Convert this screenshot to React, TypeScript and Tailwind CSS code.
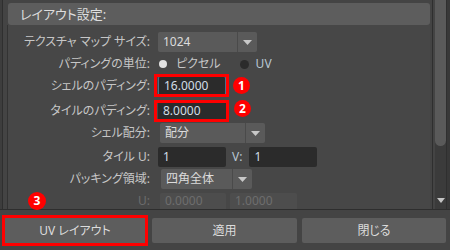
import React from "react";

const FONT = "font-['Noto_Sans','Noto_Sans_CJK_JP',sans-serif]";

function Arrow() {
  return (
    <svg width="9" height="5" viewBox="0 0 9 5">
      <polygon points="0,0 9,0 4.5,5" fill="#c8c8c8" />
    </svg>
  );
}

function Dropdown({ value, textW }: { value: string; textW: string }) {
  return (
    <div className="flex h-[20px] rounded-[2px] bg-[#5a5a5a]">
      <div className={`${textW} flex items-center pl-[5px] text-[#dcdcdc]`}>{value}</div>
      <div className="w-[20px] flex items-center justify-center border-l border-[#4a4a4a]">
        <Arrow />
      </div>
    </div>
  );
}

function Input({ value, w, focused }: { value: string; w: string; focused?: boolean }) {
  return (
    <div
      className={`${w} h-[20px] rounded-[2px] bg-[#2b2b2b] flex items-center pl-[5px] text-[#d2dde6] ${
        focused ? "border border-[#4d6f8c] pl-[4px]" : ""
      }`}
    >
      {value}
    </div>
  );
}

function Row({
  label,
  mt,
  children,
  dim,
  h = "h-[20px]",
}: {
  label: string;
  mt: string;
  children: React.ReactNode;
  dim?: boolean;
  h?: string;
}) {
  return (
    <div className={`flex items-center ${h} shrink-0 ${mt}`}>
      <div className={`w-[142px] text-right whitespace-nowrap ${dim ? "text-[#6c6c6c]" : "text-[#c6c6c6]"}`}>{label}</div>
      <div className="ml-[8px] flex items-center">{children}</div>
    </div>
  );
}

export default function App() {
  return (
    <div
      className={`relative w-[450px] h-[250px] overflow-hidden bg-[#444444] text-[12px] leading-none ${FONT}`}
      style={{ fontFeatureSettings: '"palt"' }}
    >
      <div className="flex h-[209px]">
        <div className="w-[2px] bg-[#3d3d3d]" />
        <div className="flex-1 flex flex-col border-l border-r border-[#2f2f2f] pt-[3px] pl-[5px] pr-[2px] overflow-hidden">
          <div className="h-[22px] shrink-0 rounded-[3px] bg-[#5d5d5d] flex items-center pl-[12px] text-[13px] text-[#dedede]">
            レイアウト設定:
          </div>
          <div className="flex-1 -ml-px border-l border-[#333333] bg-[#474747] flex flex-col overflow-hidden">
            <Row label="テクスチャ マップ サイズ:" mt="mt-[7px]">
              <Dropdown value="1024" textW="w-[79px]" />
            </Row>
            <Row label="パディングの単位:" mt="mt-[2px]">
              <div className="flex items-center">
                <div className="ml-[1px] w-[8px] h-[8px] rounded-full bg-[#e2e2e2]" />
                <span className="ml-[9px] text-[#c6c6c6]">ピクセル</span>
                <div className="ml-[19px] w-[9px] h-[9px] rounded-full bg-[#2b2b2b]" />
                <span className="ml-[7px] text-[#b8c6d2]">UV</span>
              </div>
            </Row>
            <Row label="シェルのパディング:" mt="mt-[2px]">
              <div className="relative">
                <Input value="16.0000" w="w-[68px]" focused />
                <div className="absolute left-[-4px] top-[-2px] w-[75px] h-[23px] border-[3px] border-[#ff0000]" />
              </div>
            </Row>
            <Row label="タイルのパディング:" mt="mt-[5px]">
              <div className="relative">
                <Input value="8.0000" w="w-[68px]" />
                <div className="absolute left-[-4px] top-[-1px] w-[75px] h-[22px] border-[3px] border-[#ff0000]" />
              </div>
            </Row>
            <Row label="シェル配分:" mt="mt-[2px]">
              <div className="ml-[2px]">
                <Dropdown value="配分" textW="w-[85px]" />
              </div>
            </Row>
            <Row label="タイル U:" mt="mt-[4px]">
              <Input value="1" w="w-[68px]" />
              <span className="ml-[6px] text-[#b8c6d2]">V:</span>
              <div className="ml-[7px]">
                <Input value="1" w="w-[68px]" />
              </div>
            </Row>
            <Row label="パッキング領域:" mt="mt-[2px]">
              <div className="ml-[3px]">
                <Dropdown value="四角全体" textW="w-[71px]" />
              </div>
            </Row>
            <Row label="U:" mt="mt-[4px]" dim h="h-[16px]">
              <div className="ml-[2px] w-[66px] h-[16px] rounded-t-[2px] bg-[#4d4d4d] flex items-center pl-[5px] text-[#6e6e6e]">
                0.0000
              </div>
              <div className="ml-[4px] w-[67px] h-[16px] rounded-t-[2px] bg-[#4d4d4d] flex items-center pl-[5px] text-[#6e6e6e]">
                1.0000
              </div>
            </Row>
          </div>
        </div>
        <div className="w-[17px] flex">
          <div className="w-[2px]" />
          <div className="w-[11px] bg-[#3b3b3b] flex flex-col">
            <div className="h-[146px] rounded-b-full bg-[#5a5a5a]" />
            <div className="flex-1" />
            <div className="h-[12px] flex items-start justify-center pt-[1px]">
              <svg width="8" height="5" viewBox="0 0 8 5">
                <polygon points="0,0 8,0 4,5" fill="#c4c4c4" />
              </svg>
            </div>
          </div>
          <div className="w-[4px] bg-[#383838] border-l border-[#2f2f2f]" />
        </div>
      </div>
      <div className="h-[41px] border-t border-[#2e2e2e] flex items-start pl-[2px]">
        <div className="mt-[5px] w-[146px] h-[31px] border-[3px] border-[#ff0000] bg-[#5d5d5d] flex items-center justify-center text-[#dcdcdc]">
          UV レイアウト
        </div>
        <div className="mt-[8px] ml-[4px] w-[145px] h-[25px] rounded-[2px] bg-[#5d5d5d] flex items-center justify-center text-[#dcdcdc]">
          適用
        </div>
        <div className="mt-[8px] ml-[5px] w-[144px] h-[25px] rounded-[2px] bg-[#5d5d5d] flex items-center justify-center text-[#dcdcdc]">
          閉じる
        </div>
      </div>
      <div className="absolute left-[233px] top-[77px] w-[17px] h-[17px] rounded-full bg-[#ff0000] flex items-center justify-center text-white text-[12px] font-bold">
        1
      </div>
      <div className="absolute left-[234px] top-[100px] w-[17px] h-[17px] rounded-full bg-[#ff0000] flex items-center justify-center text-white text-[12px] font-bold">
        2
      </div>
      <div className="absolute left-[28px] top-[192px] w-[18px] h-[18px] rounded-full bg-[#ff0000] flex items-center justify-center text-white text-[12px] font-bold">
        3
      </div>
    </div>
  );
}
